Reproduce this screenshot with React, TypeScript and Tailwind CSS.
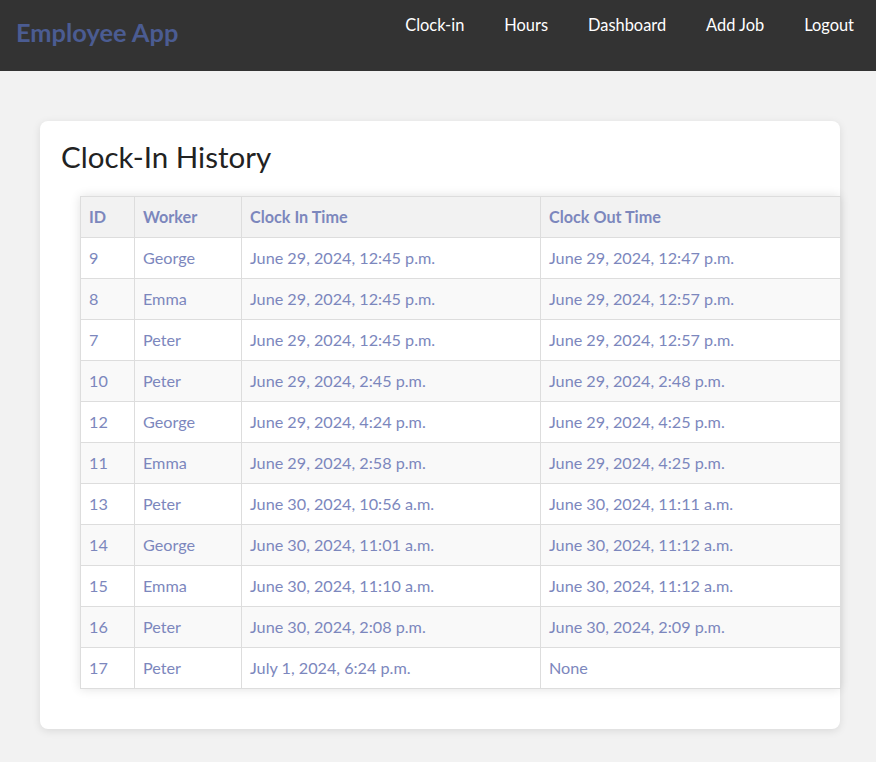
import React from 'react';

type Row = { id: number; worker: string; clockIn: string; clockOut: string };

const rows: Row[] = [
    { id: 9, worker: 'George', clockIn: 'June 29, 2024, 12:45 p.m.', clockOut: 'June 29, 2024, 12:47 p.m.' },
    { id: 8, worker: 'Emma', clockIn: 'June 29, 2024, 12:45 p.m.', clockOut: 'June 29, 2024, 12:57 p.m.' },
    { id: 7, worker: 'Peter', clockIn: 'June 29, 2024, 12:45 p.m.', clockOut: 'June 29, 2024, 12:57 p.m.' },
    { id: 10, worker: 'Peter', clockIn: 'June 29, 2024, 2:45 p.m.', clockOut: 'June 29, 2024, 2:48 p.m.' },
    { id: 12, worker: 'George', clockIn: 'June 29, 2024, 4:24 p.m.', clockOut: 'June 29, 2024, 4:25 p.m.' },
    { id: 11, worker: 'Emma', clockIn: 'June 29, 2024, 2:58 p.m.', clockOut: 'June 29, 2024, 4:25 p.m.' },
    { id: 13, worker: 'Peter', clockIn: 'June 30, 2024, 10:56 a.m.', clockOut: 'June 30, 2024, 11:11 a.m.' },
    { id: 14, worker: 'George', clockIn: 'June 30, 2024, 11:01 a.m.', clockOut: 'June 30, 2024, 11:12 a.m.' },
    { id: 15, worker: 'Emma', clockIn: 'June 30, 2024, 11:10 a.m.', clockOut: 'June 30, 2024, 11:12 a.m.' },
    { id: 16, worker: 'Peter', clockIn: 'June 30, 2024, 2:08 p.m.', clockOut: 'June 30, 2024, 2:09 p.m.' },
    { id: 17, worker: 'Peter', clockIn: 'July 1, 2024, 6:24 p.m.', clockOut: 'None' },
];

const navLinks = ['Clock-in', 'Hours', 'Dashboard', 'Add Job', 'Logout'];

export default function App() {
    return (
        <div className="min-h-[762px] bg-[#f2f2f2] font-['Lato','Noto_Sans',sans-serif]">
            {/* Navbar */}
            <nav className="h-[71px] bg-[#333333] flex items-start justify-between">
                <a className="pl-4 pt-[16px] text-[25.4px] leading-8 font-bold text-[#4b5c92]">Employee App</a>
                <ul className="flex pr-[2px]">
                    {navLinks.map((link) => (
                        <li key={link}>
                            <a className="block px-5 pt-[15px] text-[16.4px] leading-5 text-white">{link}</a>
                        </li>
                    ))}
                </ul>
            </nav>

            {/* Card */}
            <div className="ml-10 mt-[50px] w-[800px] bg-white rounded-lg shadow-[0_2px_8px_rgba(0,0,0,0.1)] pt-[19px] pb-[40px]">
                <h2 className="pl-[21px] text-[29.5px] leading-[34px] text-[#222222]">Clock-In History</h2>
                <div className="ml-10 mt-[22px] shadow-[0_0_10px_rgba(0,0,0,0.12)]">
                    <table className="w-[760px] border-collapse table-fixed text-[16.2px] text-[#7c87bd]">
                        <colgroup>
                            <col className="w-[54px]" />
                            <col className="w-[107px]" />
                            <col className="w-[299px]" />
                            <col className="w-[300px]" />
                        </colgroup>
                        <thead>
                            <tr className="bg-[#f2f2f2] h-[41px]">
                                {['ID', 'Worker', 'Clock In Time', 'Clock Out Time'].map((h) => (
                                    <th key={h} className="border border-[#dddddd] px-2 text-left font-bold">{h}</th>
                                ))}
                            </tr>
                        </thead>
                        <tbody>
                            {rows.map((r, i) => (
                                <tr key={r.id} className={`h-[41px] ${i % 2 === 1 ? 'bg-[#f9f9f9]' : 'bg-white'}`}>
                                    <td className="border border-[#dddddd] px-2">{r.id}</td>
                                    <td className="border border-[#dddddd] px-2">{r.worker}</td>
                                    <td className="border border-[#dddddd] px-2">{r.clockIn}</td>
                                    <td className="border border-[#dddddd] px-2">{r.clockOut}</td>
                                </tr>
                            ))}
                        </tbody>
                    </table>
                </div>
            </div>
        </div>
    );
}
